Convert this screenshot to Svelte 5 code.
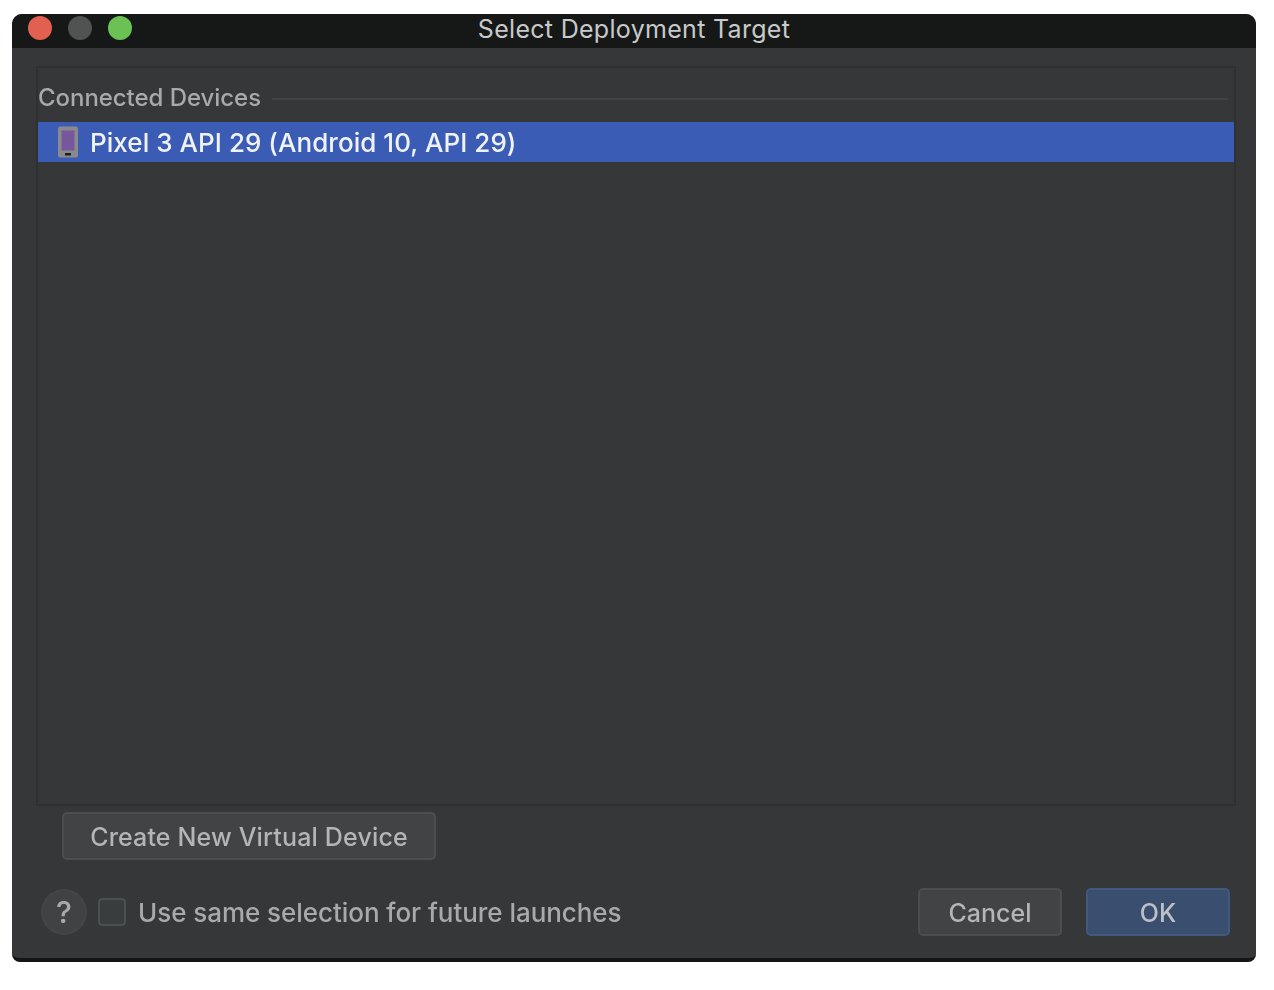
<script lang="ts">
	let sameSelection = $state(false);
</script>

<div class="page">
	<div class="dialog">
		<header class="titlebar">
			<div class="lights">
				<span class="light red"></span>
				<span class="light grey"></span>
				<span class="light green"></span>
			</div>
			<div class="title">Select Deployment Target</div>
		</header>

		<div class="content">
			<section class="panel">
				<div class="group-head">
					<span class="group-label">Connected Devices</span>
					<span class="group-rule"></span>
				</div>
				<div class="device selected">
					<svg class="phone" width="22" height="32" viewBox="0 0 22 32" aria-hidden="true">
						<rect x="1" y="0.5" width="20" height="31" rx="2" fill="#8a8a8c" />
						<rect x="4.5" y="4.5" width="13" height="20" fill="#76569c" />
						<rect x="8" y="27" width="6" height="2.5" fill="#1d1d1f" />
					</svg>
					<span>Pixel 3 API 29 (Android 10, API 29)</span>
				</div>
			</section>

			<div class="create-row">
				<button class="btn create">Create New Virtual Device</button>
			</div>

			<footer class="actions">
				<button class="help">?</button>
				<label class="same">
					<input type="checkbox" bind:checked={sameSelection} />
					<span>Use same selection for future launches</span>
				</label>
				<div class="spacer"></div>
				<button class="btn cancel">Cancel</button>
				<button class="btn ok">OK</button>
			</footer>
		</div>
	</div>
</div>

<style>
	:global(body) {
		background: #fff;
		font-family: Inter, "Liberation Sans", Arial, sans-serif;
	}

	.page {
		padding: 14px 18px 28px 12px;
	}

	.dialog {
		height: 948px;
		display: flex;
		flex-direction: column;
		background: #363739;
		border-radius: 10px 10px 8px 8px;
		border-bottom: 4px solid #141515;
		box-sizing: border-box;
		overflow: hidden;
		filter: blur(0.4px);
	}

	.titlebar {
		height: 34px;
		flex: none;
		position: relative;
		background: #161817;
		display: flex;
		align-items: center;
		justify-content: center;
	}

	.lights {
		position: absolute;
		left: 16px;
		top: 2px;
		display: flex;
		gap: 16px;
	}

	.light {
		width: 24px;
		height: 24px;
		border-radius: 50%;
	}

	.red { background: #e2604f; }
	.grey { background: #515252; }
	.green { background: #6cc155; }

	.title {
		color: #c8c9ca;
		font-size: 25px;
		letter-spacing: 0.3px;
		margin-top: -4px;
	}

	.content {
		flex: 1;
		display: flex;
		flex-direction: column;
		padding: 18px 20px 0 24px;
	}

	.panel {
		height: 740px;
		box-sizing: border-box;
		border: 2px solid #2f3031;
		flex: none;
	}

	.group-head {
		height: 54px;
		display: flex;
		align-items: center;
		gap: 11px;
		padding-top: 6px;
		padding-right: 6px;
		box-sizing: border-box;
	}

	.group-label {
		color: #a8a9aa;
		font-size: 24px;
		font-weight: 500;
		letter-spacing: -0.05px;
		margin-top: -2px;
	}

	.group-rule {
		flex: 1;
		height: 2px;
		background: #414244;
		margin-top: 2px;
	}

	.device {
		height: 40px;
		display: flex;
		align-items: center;
		gap: 11px;
		padding-left: 19px;
		color: #f0f2f8;
		font-size: 26px;
		font-weight: 500;
		letter-spacing: 0.05px;
	}

	.device.selected {
		background: #3a5cb5;
	}

	.phone {
		flex: none;
	}

	.create-row {
		padding: 6px 0 0 26px;
	}

	.btn {
		height: 48px;
		box-sizing: border-box;
		border: 2px solid #4b4d4f;
		border-radius: 5px;
		background: #424345;
		color: #b4b5b7;
		font: inherit;
		font-size: 25px;
		font-weight: 500;
		padding: 2px 0 0;
	}

	.create {
		width: 374px;
		letter-spacing: 0.16px;
	}

	.actions {
		display: flex;
		align-items: center;
		height: 48px;
		margin-top: 28px;
		padding-left: 5px;
		padding-right: 6px;
	}

	.help {
		width: 46px;
		height: 46px;
		flex: none;
		box-sizing: border-box;
		border-radius: 50%;
		border: 2px solid #444547;
		background: #414244;
		color: #a9aaab;
		font: inherit;
		font-size: 30px;
		font-weight: 500;
		padding: 0;
	}

	.same {
		display: flex;
		align-items: center;
		gap: 12px;
		margin-left: 11px;
		color: #a8a9ab;
		font-size: 26px;
		font-weight: 500;
		letter-spacing: -0.05px;
	}

	.same input {
		appearance: none;
		margin: 0;
		width: 28px;
		height: 28px;
		box-sizing: border-box;
		border: 2px solid #4d4f51;
		border-radius: 4px;
		background: #3a3d3e;
	}

	.spacer {
		flex: 1;
	}

	.cancel {
		width: 144px;
	}

	.ok {
		width: 144px;
		margin-left: 24px;
		background: #3a4f70;
		border-color: #41597f;
		color: #bdc0c5;
	}
</style>
